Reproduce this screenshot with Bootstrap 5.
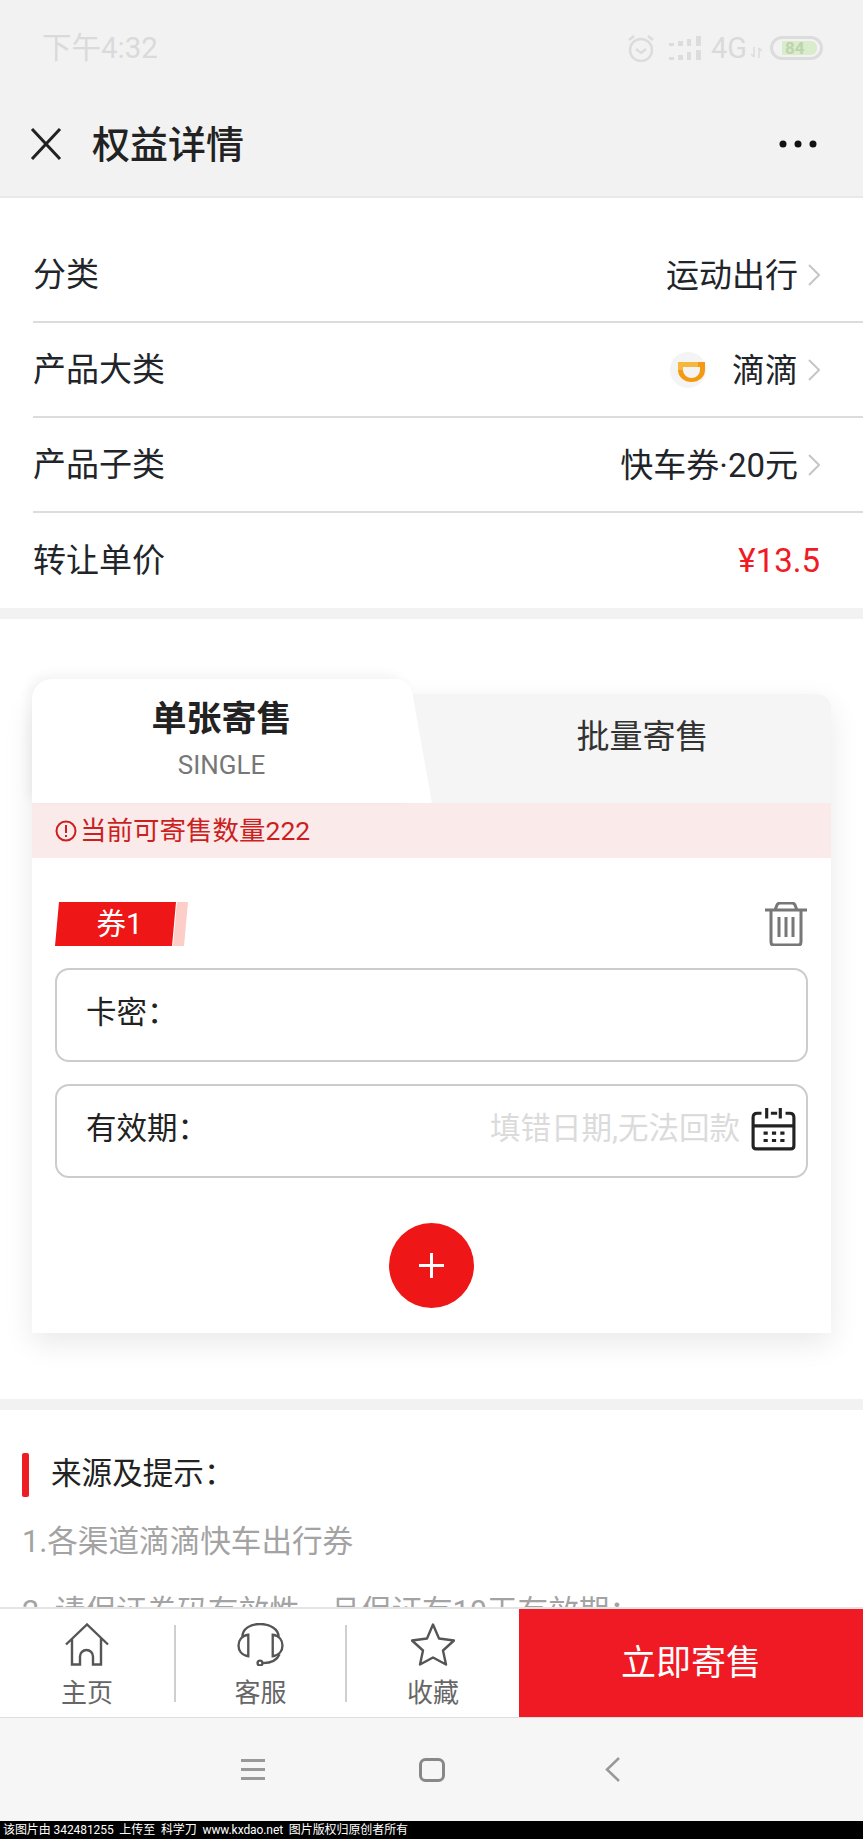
<!DOCTYPE html>
<html lang="zh-CN">
  <head>
    <meta charset="UTF-8" />
    <meta name="viewport" content="width=device-width, initial-scale=1" />
    <title>权益详情</title>
    <link
      href="https://cdn.jsdelivr.net/npm/bootstrap@5.3.3/dist/css/bootstrap.min.css"
      rel="stylesheet"
    />
    <style>
      html,
      body {
        height: 1839px;
        overflow: hidden;
      }

      body {
        font-family: Roboto, "Noto Sans CJK SC", sans-serif;
        color: #222;
        background: #fff;
      }

      /* cabecera */
      .top-area {
        background: #f2f2f2;
        border-bottom: 2px solid #e9e9e9;
      }
      .status-row {
        height: 94px;
        padding: 2px 40px 0 42px;
        color: #dadada;
        font-size: 29.5px;
      }
      .alarm-icon {
        margin-right: 14px;
      }
      .batt-box {
        width: 53px;
        height: 24px;
        border: 3px solid #dcdcdc;
        border-radius: 12px;
        padding: 2px 3px 2px 9px;
      }
      .batt-fill {
        height: 14px;
        background: #d9eccb;
        border-radius: 0 6px 6px 0;
        color: #bcd4ad;
        font-size: 17px;
        font-weight: 700;
        line-height: 14px;
        padding-left: 3px;
      }
      .net-text {
        font-size: 29px;
        line-height: 1;
        margin-left: 10px;
      }
      .title-row {
        height: 102px;
        padding: 0 46px 3px 30px;
      }
      .title-text {
        font-size: 38px;
        font-weight: 500;
        margin: 3px 0 0 30px;
        line-height: 1;
      }

      /* filas de datos */
      .info-list {
        padding: 30px 0 0 33px;
        --bs-list-group-border-color: #dcdcdc;
        --bs-list-group-border-width: 2px;
      }
      .info-row {
        height: 95px;
        padding: 0 43px 0 0;
        font-size: 33px;
      }
      .info-row .val-text {
        margin-right: 10px;
        padding-top: 3px;
      }
      .price-text {
        color: #f01b24;
        font-size: 33px;
      }
      .didi-logo {
        margin-right: 26px;
      }
      .grey-band {
        height: 11px;
        background: #f2f2f2;
      }

      /* tarjeta de venta */
      .sale-wrap {
        padding: 75px 32px 66px;
      }
      .sale-card {
        background: #fff;
        box-shadow: 0 10px 30px rgba(0, 0, 0, 0.09);
        border-radius: 14px 14px 0 0;
      }
      .tab-head {
        height: 109px;
      }
      .tab-on {
        position: relative;
        z-index: 1;
        width: 378px;
        height: 124px;
        margin-top: -15px;
        padding: 21px 0 0 1px;
        background: #fff;
        border-radius: 20px 20px 0 0;
        box-shadow: -3px -4px 12px rgba(0, 0, 0, 0.05);
        text-align: center;
      }
      .tab-on::after {
        content: "";
        position: absolute;
        top: 0;
        bottom: 0;
        right: 0;
        width: 40px;
        background: #fff;
        border-top-right-radius: 14px;
        transform: skewX(10deg);
        transform-origin: top left;
        z-index: -1;
      }
      .tab-on-title {
        font-size: 35px;
        font-weight: 700;
        line-height: 40px;
      }
      .tab-on-sub {
        font-size: 26px;
        line-height: 30px;
        margin-top: 10px;
        color: #777;
      }
      .tab-off {
        padding: 0 0 24px 44px;
        background: #f5f5f5;
        border-radius: 0 14px 0 0;
        font-size: 33px;
        color: #333;
      }
      .stock-note {
        height: 55px;
        padding-left: 23px;
        background: #fbeaea;
        color: #cc1f1f;
        font-size: 26.5px;
        gap: 3px;
      }
      .sale-body {
        padding: 44px 23px 25px;
      }
      .coupon-tag {
        position: relative;
        width: 121px;
        height: 44px;
        padding-left: 8px;
        color: #fff;
        font-size: 29.5px;
        line-height: 44px;
        text-align: center;
        background: #ee1616;
        clip-path: polygon(4px 0, 100% 0, 117px 100%, 0 100%);
      }
      .coupon-tail {
        width: 15px;
        height: 44px;
        margin-left: -3px;
        background: #fdcdc8;
        clip-path: polygon(4px 0, 100% 0, 11px 100%, 0 100%);
      }
      .field-box {
        height: 94px;
        padding: 0 10px 4px 29px;
        border: 2px solid #ccc;
        border-radius: 14px;
        font-size: 30.5px;
        margin-top: 22px;
      }
      .hint-text {
        color: #dbdbdb;
        margin-right: 11px;
      }
      .add-btn {
        width: 85px;
        height: 85px;
        margin: 45px auto 0;
        padding: 0;
        background: #ee1616;
        border: 0;
      }

      /* notas */
      .notes-wrap {
        padding: 43px 22px 0;
      }
      .notes-mark {
        width: 7px;
        height: 44px;
        background: #ee1c25;
        border-radius: 2px;
      }
      .notes-title {
        font-size: 30.6px;
        margin: -3px 0 0 22px;
      }
      .notes-line {
        font-size: 30.6px;
        line-height: 70px;
        color: #a3a3a3;
        margin: 0;
        white-space: nowrap;
      }
      .notes-first {
        margin-top: 10px;
      }

      /* barra inferior */
      .tab-bar {
        height: 110px;
        background: #fff;
        border-top: 2px solid #e4e4e4;
      }
      .tab-cell {
        flex: 1;
        padding-top: 14px;
        text-align: center;
        font-size: 26px;
        color: #666;
      }
      .tab-cell-first {
        flex: 0 0 174px;
      }
      .tab-cell-mid {
        flex: 0 0 169px;
      }
      .tab-cell svg {
        display: block;
        height: 43px;
        margin: 0 auto;
      }
      .tab-label {
        line-height: 30px;
        margin-top: 12px;
      }
      .tab-sep {
        width: 2px;
        height: 77px;
        margin-top: 16px;
        background: #cfcfcf;
      }
      .sell-btn {
        width: 344px;
        height: 108px;
        padding: 3px 0 0;
        background: #f01a24;
        color: #fff;
        font-size: 35px;
        border: 0;
        border-radius: 0;
      }
      .sys-bar {
        height: 104px;
        background: #f6f6f6;
        border-top: 1px solid #dedede;
        padding-left: 241px;
        gap: 154px;
      }
      .back-mark {
        margin-left: 6px;
      }
      .mark-strip {
        height: 18px;
        padding-left: 3px;
        background: #000;
        color: #fff;
        font-size: 12px;
        line-height: 18px;
        letter-spacing: -0.08px;
        white-space: pre;
      }
    </style>
  </head>
  <body>
    <!-- Cabecera -->
    <header class="top-area">
      <div class="status-row d-flex justify-content-between align-items-center">
        <span>下午4:32</span>
        <div class="d-flex align-items-center">
          <svg class="alarm-icon" width="28" height="27" viewBox="0 0 28 27" fill="none" stroke="#dcdcdc" stroke-width="2.5">
            <circle cx="14" cy="15" r="11" />
            <path d="M9 14l5 4 5-4M2 5l5-4M26 5l-5-4" />
          </svg>
          <svg width="32" height="24" viewBox="0 0 32 24" fill="#dcdcdc">
            <path d="M0 7h5v3H0zM9 5h5v5H9zM18 3h4v7h-4zM27 0h5v10h-5zM0 21h5v3H0zM9 19h5v5H9zM18 16h4v8h-4zM27 14h5v10h-5z" />
          </svg>
          <span class="net-text">4G</span>
          <svg class="ms-1 me-2 mt-2" width="11" height="11" viewBox="0 0 11 11" fill="none" stroke="#dcdcdc" stroke-width="1.5">
            <path d="M3 0v10M0 7l3 3M8 11V1M8 1l3 3" />
          </svg>
          <div class="batt-box"><div class="batt-fill">84</div></div>
        </div>
      </div>
      <div class="title-row d-flex align-items-center">
        <svg width="32" height="32" viewBox="0 0 32 32" fill="none" stroke="#222" stroke-width="3">
          <path d="M2 1l28 30M30 1L2 31" />
        </svg>
        <h1 class="title-text">权益详情</h1>
        <svg class="ms-auto" width="38" height="8" viewBox="0 0 38 8" fill="#111">
          <circle cx="4" cy="4" r="3.5" /><circle cx="19" cy="4" r="3.5" /><circle cx="34" cy="4" r="3.5" />
        </svg>
      </div>
    </header>

    <!-- Datos -->
    <ul class="list-group list-group-flush info-list">
      <li class="list-group-item info-row d-flex justify-content-between align-items-center">
        <span>分类</span>
        <span class="d-flex align-items-center">
          <span class="val-text">运动出行</span>
          <svg width="12" height="22" viewBox="0 0 12 22" fill="none" stroke="#c6c6c6" stroke-width="2"><path d="M1 1l10 10L1 21" /></svg>
        </span>
      </li>
      <li class="list-group-item info-row d-flex justify-content-between align-items-center">
        <span>产品大类</span>
        <span class="d-flex align-items-center">
          <svg class="didi-logo" width="36" height="36" viewBox="0 0 36 36">
            <circle cx="18" cy="18" r="18" fill="#f4f4f4" />
            <path d="M8 10h27v8a13.500 12 0 0 1-27 0z" fill="#f39a12" />
            <path d="M13 15h17v3a8.500 8 0 0 1-17 0z" fill="#f4f4f4" />
            <path d="M8 10h20v5H13v3H8z" fill="#f7b73c" />
          </svg>
          <span class="val-text">滴滴</span>
          <svg width="12" height="22" viewBox="0 0 12 22" fill="none" stroke="#c6c6c6" stroke-width="2"><path d="M1 1l10 10L1 21" /></svg>
        </span>
      </li>
      <li class="list-group-item info-row d-flex justify-content-between align-items-center">
        <span>产品子类</span>
        <span class="d-flex align-items-center">
          <span class="val-text">快车券·20元</span>
          <svg width="12" height="22" viewBox="0 0 12 22" fill="none" stroke="#c6c6c6" stroke-width="2"><path d="M1 1l10 10L1 21" /></svg>
        </span>
      </li>
      <li class="list-group-item info-row d-flex justify-content-between align-items-center">
        <span>转让单价</span>
        <span class="price-text">¥13.5</span>
      </li>
    </ul>
    <div class="grey-band"></div>

    <!-- Tarjeta de venta -->
    <section class="sale-wrap">
      <div class="sale-card">
        <div class="tab-head d-flex">
          <div class="tab-on">
            <div class="tab-on-title">单张寄售</div>
            <div class="tab-on-sub">SINGLE</div>
          </div>
          <div class="tab-off flex-grow-1 d-flex justify-content-center align-items-center">批量寄售</div>
        </div>
        <div class="stock-note d-flex align-items-center">
          <svg width="22" height="22" viewBox="0 0 22 22" fill="none" stroke="#cc1f1f" stroke-width="2">
            <circle cx="11" cy="11" r="9.5" />
            <path d="M11 5v8M11 15v2" />
          </svg>
          <span>当前可寄售数量222</span>
        </div>
        <div class="sale-body">
          <div class="d-flex align-items-center">
            <div class="coupon-tag">券1</div>
            <div class="coupon-tail"></div>
            <svg class="ms-auto" width="44" height="44" viewBox="0 0 44 44" fill="none" stroke="#777" stroke-width="3">
              <path d="M1 8h42M11 8l2-5q1-2 3-2h12q2 0 3 2l2 5M7 8v32q0 3 3 3h24q3 0 3-3V8M15 15v20M22 15v20M29 15v20" />
            </svg>
          </div>
          <div class="field-box d-flex align-items-center">卡密：</div>
          <div class="field-box d-flex align-items-center">
            <span>有效期：</span>
            <span class="hint-text ms-auto">填错日期,无法回款</span>
            <svg width="45" height="43" viewBox="0 0 43 41" fill="none" stroke="#222" stroke-width="3">
              <path d="M10 5H6Q2 5 2 9v27q0 3 3 3h33q3 0 3-3V9q0-4-4-4h-4M19 5h6M15 0v10M28 0v10M2 17h39" />
              <path d="M12 24h4M20 24h4M28 24h4M12 31h4M20 31h4M28 31h4" />
            </svg>
          </div>
          <button class="btn add-btn rounded-circle d-flex justify-content-center align-items-center" type="button">
            <svg width="25" height="25" viewBox="0 0 25 25" stroke="#fff" stroke-width="3"><path d="M0 12.5h25M12.5 0v25" /></svg>
          </button>
        </div>
      </div>
    </section>
    <div class="grey-band"></div>

    <!-- Notas -->
    <section class="notes-wrap">
      <div class="d-flex align-items-center">
        <div class="notes-mark"></div>
        <div class="notes-title">来源及提示：</div>
      </div>
      <p class="notes-line notes-first">1.各渠道滴滴快车出行券</p>
      <p class="notes-line">2. 请保证券码有效性，且保证有10天有效期：</p>
    </section>

    <!-- Barra inferior -->
    <div class="fixed-bottom">
      <div class="tab-bar d-flex">
        <div class="tab-cell tab-cell-first">
          <svg width="44" height="42" viewBox="0 0 44 42" fill="none" stroke="#555" stroke-width="2.4">
            <path d="M1 21L22 1l21 20M7 15v26h8v-8a6.500 6.500 0 0 1 13 0v8h8V15" />
          </svg>
          <div class="tab-label">主页</div>
        </div>
        <div class="tab-sep"></div>
        <div class="tab-cell tab-cell-mid">
          <svg width="47" height="44" viewBox="0 0 47 44" fill="none" stroke="#555" stroke-width="2.4">
            <path d="M5 14C5 6 13 1 23 1s19 5 19 13" />
            <path d="M11 12v22C4 33 1 28 1 23s3-10 10-11zM36 12v22c7-1 10-6 10-11s-3-10-10-11z" />
            <circle cx="23" cy="41" r="2.500" />
            <path d="M26 41c8 0 14-2 17-9" />
          </svg>
          <div class="tab-label">客服</div>
        </div>
        <div class="tab-sep"></div>
        <div class="tab-cell">
          <svg width="44" height="42" viewBox="0 0 44 42" fill="none" stroke="#555" stroke-width="2.4" stroke-linejoin="round">
            <path d="M22 1l6 14 15 2-11 10 3 14-13-7-13 7 3-14L1 17l15-2z" />
          </svg>
          <div class="tab-label">收藏</div>
        </div>
        <button class="btn sell-btn" type="button">立即寄售</button>
      </div>
      <div class="sys-bar d-flex align-items-center">
        <svg width="24" height="21" viewBox="0 0 24 21" stroke="#999" stroke-width="3"><path d="M0 1.500h24M0 10.500h24M0 19.500h24" /></svg>
        <svg width="26" height="24" viewBox="0 0 26 24" fill="none" stroke="#888" stroke-width="3"><rect x="1.500" y="1.500" width="23" height="21" rx="5" /></svg>
        <svg class="back-mark" width="16" height="25" viewBox="0 0 16 25" fill="none" stroke="#999" stroke-width="2.500"><path d="M14 1L2 12.500 14 24" /></svg>
      </div>
      <div class="mark-strip">该图片由 342481255  上传至  科学刀  www.kxdao.net  图片版权归原创者所有</div>
    </div>

    <script src="https://cdn.jsdelivr.net/npm/bootstrap@5.3.3/dist/js/bootstrap.bundle.min.js"></script>
  </body>
</html>
